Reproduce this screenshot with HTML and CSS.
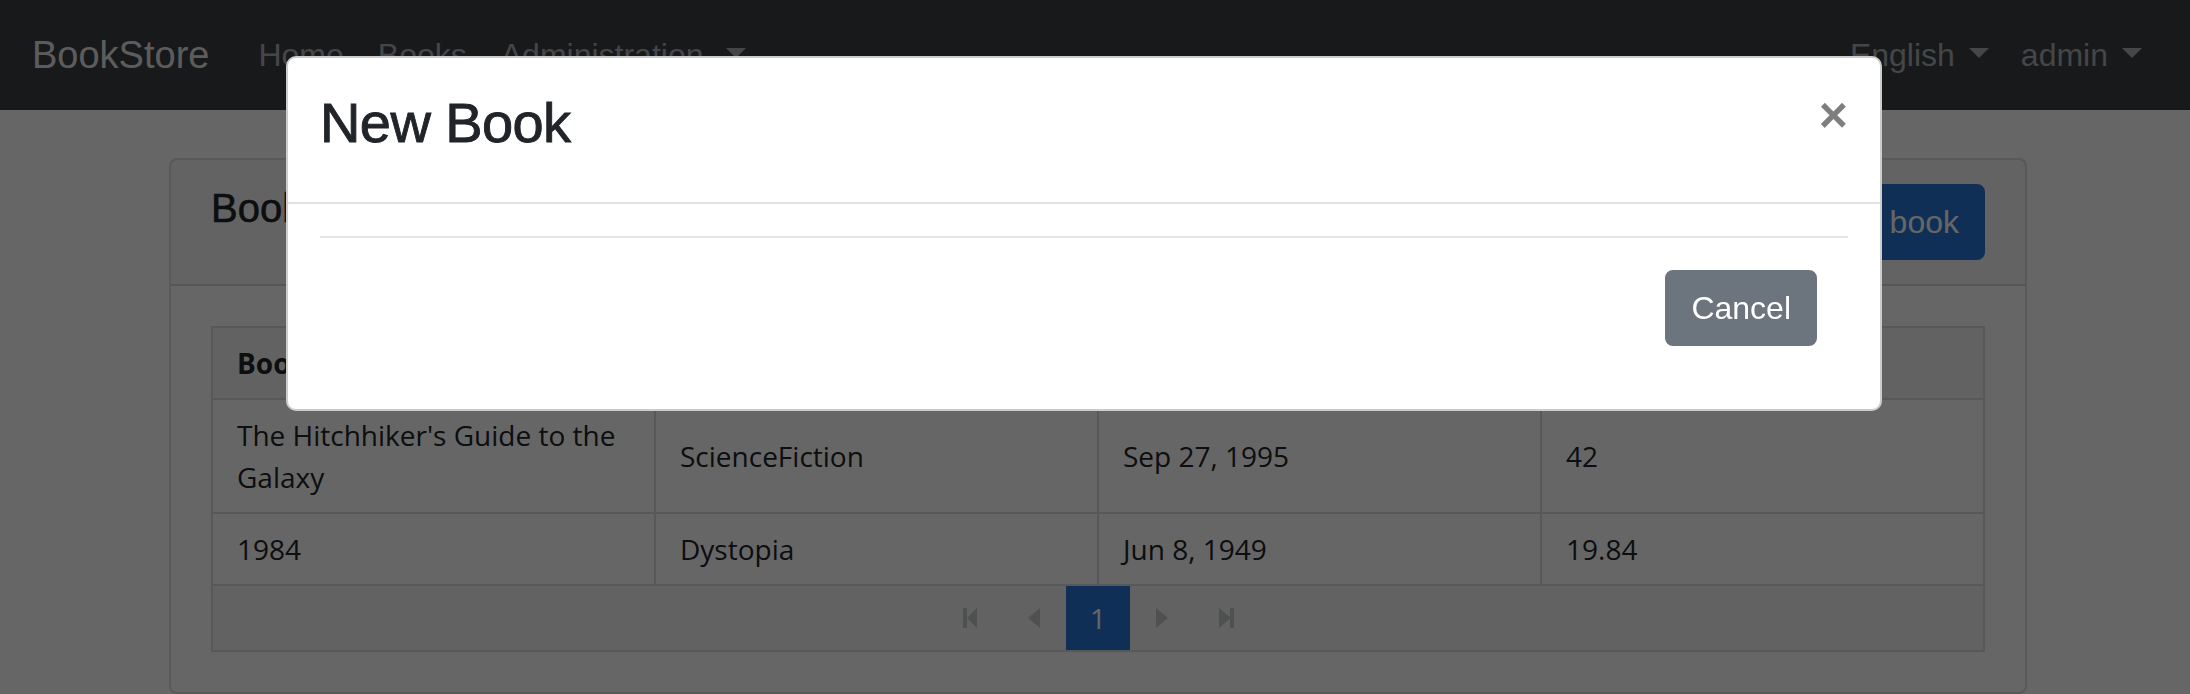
FILE: index.html
```html
<!DOCTYPE html>
<html lang="en">
<head>
<meta charset="utf-8">
<title>BookStore</title>
<link rel="stylesheet" href="styles.css">
</head>
<body>
<nav class="navbar">
  <a class="brand" href="#">BookStore</a>
  <ul class="nav nav-main">
    <li><a class="nav-link" href="#">Home</a></li>
    <li><a class="nav-link" href="#">Books</a></li>
    <li><a class="nav-link dropdown-toggle" href="#">Administration</a></li>
  </ul>
  <ul class="nav nav-right">
    <li><a class="nav-link dropdown-toggle" href="#">English</a></li>
    <li><a class="nav-link dropdown-toggle" href="#">admin</a></li>
  </ul>
</nav>

<main class="container">
  <section class="card">
    <header class="card-header">
      <h5 class="card-title">Books</h5>
      <button class="btn btn-primary">New book</button>
    </header>
    <div class="card-body">
      <table class="table">
        <thead>
          <tr><th>Book Name</th><th>Type</th><th>Publish Date</th><th>Price</th></tr>
        </thead>
        <tbody>
          <tr><td>The Hitchhiker's Guide to the Galaxy</td><td>ScienceFiction</td><td>Sep 27, 1995</td><td>42</td></tr>
          <tr><td>1984</td><td>Dystopia</td><td>Jun 8, 1949</td><td>19.84</td></tr>
        </tbody>
        <tfoot>
          <tr>
            <td colspan="4" class="pager-cell">
              <ul class="pagination">
                <li class="page-item"><a class="page-link" href="#"><svg width="14" height="20" viewBox="0 0 14 20"><rect x="0" y="0" width="4" height="20"/><polygon points="14,0 4,10 14,20"/></svg></a></li>
                <li class="page-item"><a class="page-link" href="#"><svg width="12" height="20" viewBox="0 0 12 20"><polygon points="12,0 0,10 12,20"/></svg></a></li>
                <li class="page-item active"><a class="page-link" href="#">1</a></li>
                <li class="page-item"><a class="page-link" href="#"><svg width="12" height="20" viewBox="0 0 12 20"><polygon points="0,0 12,10 0,20"/></svg></a></li>
                <li class="page-item"><a class="page-link" href="#"><svg width="15" height="20" viewBox="0 0 15 20"><polygon points="0,0 12,10 0,20"/><rect x="11" y="0" width="4" height="20"/></svg></a></li>
              </ul>
            </td>
          </tr>
        </tfoot>
      </table>
    </div>
  </section>
</main>

<div class="backdrop"></div>

<div class="modal">
  <div class="modal-dialog">
    <div class="modal-content">
      <div class="modal-header">
        <h3 class="modal-title">New Book</h3>
        <button class="close" type="button">×</button>
      </div>
      <div class="modal-body">
        <hr class="divider">
        <div class="modal-footer">
          <button class="btn btn-secondary" type="button">Cancel</button>
        </div>
      </div>
    </div>
  </div>
</div>
</body>
</html>
```

FILE: styles.css
```css
* { box-sizing: border-box; }

html, body {
  margin: 0;
  padding: 0;
  height: 694px;
  overflow: hidden;
}

body {
  font-family: "Liberation Sans", Arial, sans-serif;
  font-size: 32px;
  line-height: 1.5;
  color: #212529;
  background: #ffffff;
}

/* ---------- navbar ---------- */
.navbar {
  display: flex;
  align-items: center;
  height: 110px;
  padding: 0 32px;
  background: #3d4045;
}

.brand {
  font-size: 38px;
  line-height: 60px;
  color: rgba(255, 255, 255, 0.9);
  text-decoration: none;
  margin-right: 32px;
}

.nav {
  display: flex;
  list-style: none;
  margin: 0;
  padding: 0;
}

.nav-right { margin-left: auto; }

.nav-link {
  display: block;
  padding: 12px 16px;
  color: #acafb4;
  text-decoration: none;
  line-height: 48px;
}

.nav-main .nav-link { padding: 12px 17px; }

.dropdown-toggle::after {
  content: "";
  display: inline-block;
  margin-left: 14px;
  vertical-align: 8px;
  border-top: 10px solid;
  border-left: 10px solid transparent;
  border-right: 10px solid transparent;
}

.nav-main .dropdown-toggle::after { margin-left: 22px; }

/* ---------- container / card ---------- */
.container {
  width: 1858px;
  margin: 48px 0 0 calc(50% - 926px);
}

.card {
  border: 2px solid rgba(0, 0, 0, 0.125);
  border-radius: 8px;
  background: #ffffff;
}

.card-header {
  display: flex;
  justify-content: space-between;
  align-items: flex-start;
  padding: 24px 40px;
  background: rgba(0, 0, 0, 0.03);
  border-bottom: 2px solid rgba(0, 0, 0, 0.125);
}

.card-title {
  margin: 0;
  font-size: 40px;
  font-weight: 400;
  line-height: 1.2;
  -webkit-text-stroke: 0.6px currentColor;
}

.card-body { padding: 40px; }

.btn {
  font-family: "Liberation Sans", Arial, sans-serif;
  font-size: 32px;
  line-height: 48px;
  padding: 12px 24px;
  border: 2px solid transparent;
  border-radius: 8px;
  color: #ffffff;
  cursor: pointer;
}

.btn-primary {
  background: #2676d9;
  border-color: #2676d9;
}

.btn-secondary {
  background: #6c757d;
  border-color: #6c757d;
}

/* ---------- table ---------- */
.table {
  width: 100%;
  table-layout: fixed;
  border-collapse: collapse;
  font-family: "Open Sans", sans-serif;
  font-size: 28px;
  line-height: 42px;
  color: #212529;
}

.table th,
.table td {
  border: 2px solid #d8dbdf;
  padding: 14px 24px;
  text-align: left;
  vertical-align: middle;
}

.table thead th {
  background: #f5f5f5;
  font-weight: 700;
}

.table td.pager-cell {
  padding: 0;
  background: #f5f5f5;
}

.pagination {
  display: flex;
  justify-content: center;
  list-style: none;
  margin: 0;
  padding: 0;
}

.page-link {
  display: flex;
  align-items: center;
  justify-content: center;
  width: 64px;
  height: 64px;
  color: #ffffff;
  text-decoration: none;
}

.page-link svg { fill: #c6c7c9; }

.page-item.active .page-link { background: #2676d9; }

/* ---------- modal ---------- */
.backdrop {
  position: fixed;
  inset: 0;
  background: rgba(0, 0, 0, 0.6);
}

.modal {
  position: fixed;
  inset: 0;
}

.modal-dialog {
  width: 1596px;
  margin: 56px 0 0 286px;
}

.modal-content {
  background: #ffffff;
  border: 2px solid rgba(0, 0, 0, 0.2);
  border-radius: 10px;
}

.modal-header {
  display: flex;
  align-items: flex-start;
  padding: 32px;
  border-bottom: 2px solid #dee2e6;
}

.modal-title {
  margin: 0 0 14px;
  font-size: 56px;
  font-weight: 400;
  line-height: 66px;
  letter-spacing: -0.6px;
  -webkit-text-stroke: 0.9px currentColor;
}

.close {
  margin: -32px -32px -32px auto;
  padding: 32px;
  background: none;
  border: 0;
  font-family: "Liberation Sans", Arial, sans-serif;
  font-size: 50px;
  font-weight: 700;
  line-height: 1;
  color: #000000;
  opacity: 0.5;
}

.modal-body { padding: 32px; }

.divider {
  margin: 0;
  border: 0;
  border-top: 2px solid #e4e7ea;
}

.modal-footer {
  display: flex;
  justify-content: flex-end;
  padding: 32px 31px 31px;
}
```
